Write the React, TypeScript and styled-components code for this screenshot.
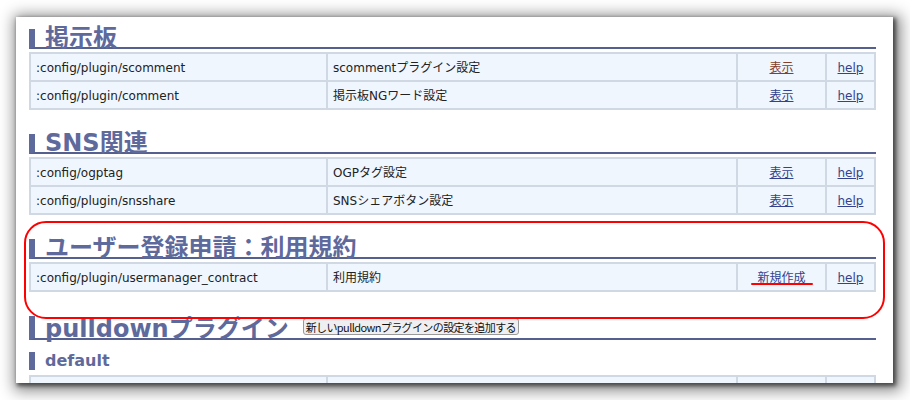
import React from 'react'
import styled, { createGlobalStyle } from 'styled-components'

const GlobalStyle = createGlobalStyle`
  html, body {
    margin: 0;
    padding: 0;
    background: #ffffff;
  }
  body {
    font-family: "DejaVu Sans", "Noto Sans CJK JP", sans-serif;
    font-size: 12px;
    color: #222;
  }
`

const Page = styled.div`
  width: 910px;
  height: 400px;
  padding: 17px 17px 0 16px;
  box-sizing: border-box;
  overflow: hidden;
`

const Panel = styled.div`
  position: relative;
  width: 877px;
  height: 366px;
  background: #fff;
  box-shadow: 2px 2px 4px 1px rgba(0, 0, 0, 0.55), 3px 3px 14px 5px rgba(0, 0, 0, 0.45);
  padding: 12px 0 0 13px;
  box-sizing: border-box;
  overflow: hidden;
`

const Section = styled.section`
  width: 847px;
  margin-bottom: 24px;
`

const Heading = styled.h2<{ $tall?: boolean }>`
  margin: 0 0 3px;
  padding-left: 10px;
  border-left: 6px solid #5f6a9c;
  border-bottom: 2px solid #56608f;
  font-size: 24px;
  line-height: 18px;
  height: ${({ $tall }) => ($tall ? '22px' : '18px')};
  font-weight: bold;
  color: #5f6a9c;
  display: flex;
  align-items: flex-end;
  white-space: nowrap;
`

const SubHeading = styled.h3`
  margin: 12px 0 5px;
  padding-left: 10px;
  border-left: 6px solid #5f6a9c;
  font-size: 16px;
  line-height: 18px;
  font-weight: bold;
  color: #5f6a9c;
`

const AddButton = styled.button`
  margin: 0 0 1px 14px;
  height: 17px;
  padding: 0 2px;
  font-family: "Noto Sans CJK JP", "DejaVu Sans", sans-serif;
  font-size: 11px;
  letter-spacing: -0.6px;
  line-height: 14px;
  color: #111;
  background: #efeff2;
  border: 1px solid #9a9a9a;
  border-radius: 3px;
  align-self: center;
`

const Table = styled.table`
  width: 847px;
  table-layout: fixed;
  border-collapse: separate;
  border-spacing: 2px;
  background: #cfd8e3;
`

const Cell = styled.td<{ $w: number; $center?: boolean }>`
  width: ${({ $w }) => $w}px;
  height: 26px;
  padding: 1px 5px 0;
  box-sizing: border-box;
  line-height: 16px;
  background: #eff6fe;
  text-align: ${({ $center }) => ($center ? 'center' : 'left')};
  white-space: nowrap;
  overflow: hidden;
`

const Link = styled.a<{ $visited?: boolean }>`
  color: ${({ $visited }) => ($visited ? '#84402a' : '#33428e')};
  text-decoration: underline;
  cursor: pointer;
`

// red hand-drawn highlight over the third section
const Annotation = styled.div`
  position: absolute;
  left: 8px;
  top: 204px;
  width: 861px;
  height: 98px;
  box-sizing: border-box;
  border: 2px solid #ff0000;
  border-radius: 22px;
  pointer-events: none;
`

const Mark = styled.div`
  position: absolute;
  left: 735px;
  top: 266px;
  width: 62px;
  height: 2px;
  background: #ff0000;
  border-radius: 1px;
`

type Row = { path: string; desc: string; action: string; visited?: boolean }

const sections: { title: string; rows: Row[] }[] = [
  {
    title: '掲示板',
    rows: [
      { path: ':config/plugin/scomment', desc: 'scommentプラグイン設定', action: '表示', visited: true },
      { path: ':config/plugin/comment', desc: '掲示板NGワード設定', action: '表示' },
    ],
  },
  {
    title: 'SNS関連',
    rows: [
      { path: ':config/ogptag', desc: 'OGPタグ設定', action: '表示' },
      { path: ':config/plugin/snsshare', desc: 'SNSシェアボタン設定', action: '表示' },
    ],
  },
  {
    title: 'ユーザー登録申請：利用規約',
    rows: [{ path: ':config/plugin/usermanager_contract', desc: '利用規約', action: '新規作成' }],
  },
]

const ConfigTable = ({ rows }: { rows: Row[] }) => (
  <Table>
    <tbody>
      {rows.map((r, i) => (
        <tr key={i}>
          <Cell $w={295}>{r.path}</Cell>
          <Cell $w={408}>{r.desc}</Cell>
          <Cell $w={87} $center>
            {r.action && <Link $visited={r.visited}>{r.action}</Link>}
          </Cell>
          <Cell $w={47} $center>
            {r.path && <Link>help</Link>}
          </Cell>
        </tr>
      ))}
    </tbody>
  </Table>
)

const App = () => (
  <>
    <GlobalStyle />
    <Page>
      <Panel>
        {sections.map((s) => (
          <Section key={s.title}>
            <Heading>{s.title}</Heading>
            <ConfigTable rows={s.rows} />
          </Section>
        ))}
        <Section>
          <Heading $tall>
            pulldownプラグイン
            <AddButton type="button">新しいpulldownプラグインの設定を追加する</AddButton>
          </Heading>
          <SubHeading>default</SubHeading>
          <ConfigTable rows={[{ path: '', desc: '', action: '' }]} />
        </Section>
        <Annotation />
        <Mark />
      </Panel>
    </Page>
  </>
)

export default App
